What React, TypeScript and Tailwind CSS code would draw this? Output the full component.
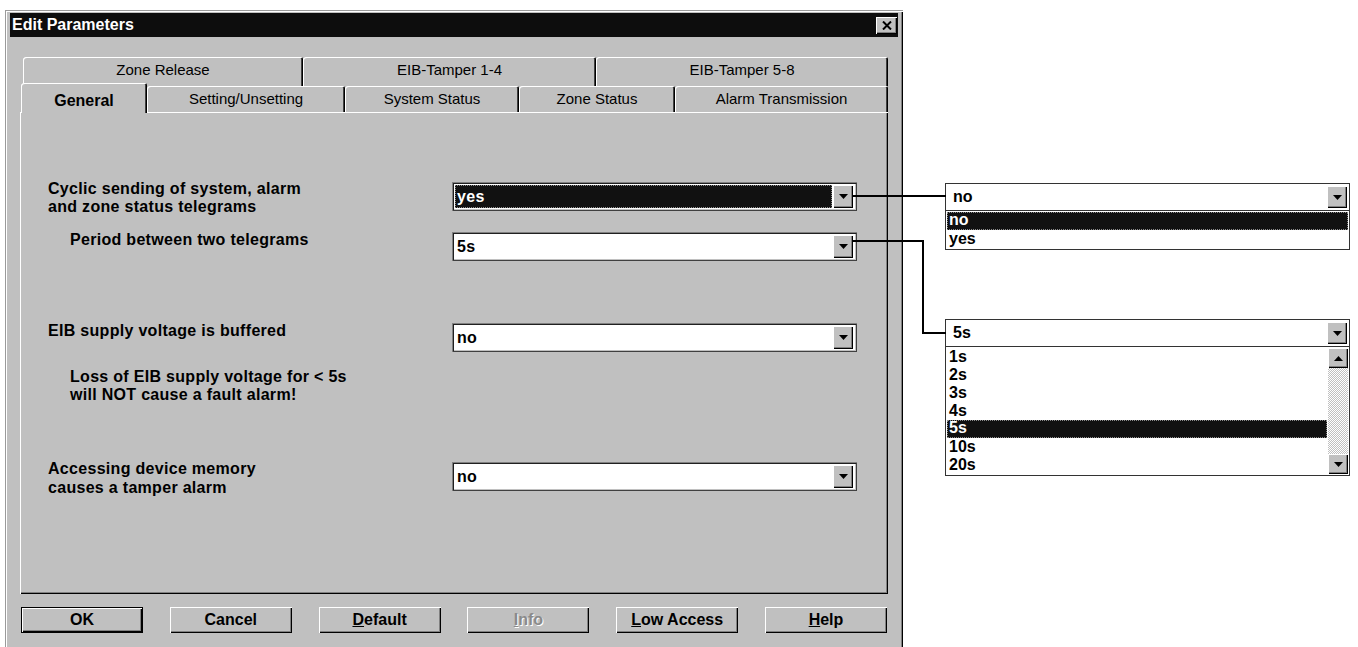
import React from "react";

const raised =
  "shadow-[inset_1px_1px_#ffffff,inset_-1px_-1px_#000000,inset_-2px_-2px_#808080]";

function DownArrow() {
  return (
    <svg width="9" height="5" viewBox="0 0 9 5" className="block">
      <polygon points="0,0 9,0 4.5,5" fill="#000" />
    </svg>
  );
}

function UpArrow() {
  return (
    <svg width="9" height="5" viewBox="0 0 9 5" className="block">
      <polygon points="0,5 9,5 4.5,0" fill="#000" />
    </svg>
  );
}

function DropButton() {
  return (
    <div className={`flex h-full w-[20px] shrink-0 items-center justify-center bg-[#c0c0c0] ${raised}`}>
      <DownArrow />
    </div>
  );
}

function Combo({ value, active }: { value: string; active?: boolean }) {
  return (
    <div className="flex h-[29px] w-[405px] shrink-0 bg-white p-[3px] pr-[4px] shadow-[inset_1px_1px_#808080,inset_-1px_-1px_#404040,inset_2px_2px_#202020,inset_-2px_-2px_#c0c0c0]">
      <div className="flex min-w-0 flex-1 items-stretch pr-[1px]">
        {active ? (
          <div className="flex w-full items-center border border-dotted border-[#8a8a8a] bg-[#111] pl-[1px] text-[16px] font-bold leading-none text-white">
            {value}
          </div>
        ) : (
          <div className="flex items-center pl-[2px] text-[16px] font-bold leading-none">{value}</div>
        )}
      </div>
      <DropButton />
    </div>
  );
}

function BackTab({ label, w }: { label: string; w: string }) {
  return (
    <div
      className={`flex h-[29px] items-start justify-center rounded-tl-[3px] rounded-tr-[2px] bg-[#c0c0c0] pt-[2px] text-[15px] shadow-[inset_1px_1px_#ffffff,inset_-1px_0_#000000,inset_-2px_0_#404040] ${w}`}
    >
      {label}
    </div>
  );
}

function FrontTab({ label, w }: { label: string; w: string }) {
  return (
    <div
      className={`flex h-[26px] items-center justify-center rounded-tl-[3px] rounded-tr-[2px] bg-[#c0c0c0] text-[15px] shadow-[inset_1px_1px_#ffffff,inset_-1px_0_#000000,inset_-2px_0_#404040] ${w}`}
    >
      {label}
    </div>
  );
}

function Button({
  children,
  isDefault,
  disabled,
}: {
  children: React.ReactNode;
  isDefault?: boolean;
  disabled?: boolean;
}) {
  return (
    <div
      className={`flex h-[26px] w-[122px] items-center justify-center bg-[#c0c0c0] text-[16px] font-bold ${
        isDefault
          ? "border border-black shadow-[inset_1px_1px_#ffffff,inset_-1px_-1px_#000000,inset_-2px_-2px_#808080]"
          : raised
      } ${disabled ? "text-[#8a8a8a] [text-shadow:1px_1px_0_#ffffff]" : "text-black"}`}
    >
      {children}
    </div>
  );
}

function ListRow({ text, selected }: { text: string; selected?: boolean }) {
  return (
    <div
      className={`flex h-[18px] items-end pl-[1px] text-[16px] font-bold leading-none ${
        selected ? "border border-dotted border-[#8a8a8a] bg-[#111] text-white" : "pl-[2px] text-black"
      }`}
    >
      <span className="pb-[1px]">{text}</span>
    </div>
  );
}

function PopupCombo({ value }: { value: string }) {
  return (
    <div className="flex h-[28px] border border-[#333] bg-white p-[2px]">
      <div className="flex flex-1 items-center pl-[5px] text-[16px] font-bold leading-none">{value}</div>
      <DropButton />
    </div>
  );
}

export default function App() {
  const periods = ["1s", "2s", "3s", "4s", "5s", "10s", "20s"];
  return (
    <div className="relative h-[647px] w-[1358px] overflow-hidden bg-white font-['Liberation_Sans',Arial,Helvetica,sans-serif] text-black">
      <div className="flex items-start">
        {/* Parameter dialog */}
        <div className="ml-[5px] mt-[10px] flex h-[645px] w-[898px] shrink-0 flex-col bg-[#c0c0c0] shadow-[inset_1px_1px_#9a9a9a,inset_2px_2px_#ffffff,inset_-1px_-1px_#000000,inset_-2px_-2px_#808080]">
          {/* Title bar */}
          <div className="mx-[5px] mt-[3px] flex h-[24px] items-center justify-between bg-[#0d0d0d] pl-[2px] pr-[1px]">
            <span className="text-[16px] font-bold leading-none text-white">Edit Parameters</span>
            <div className={`flex h-[17px] w-[21px] items-center justify-center bg-[#c0c0c0] ${raised}`}>
              <svg width="10" height="9" viewBox="0 0 10 9">
                <path d="M1 0.5 L9 8.5 M9 0.5 L1 8.5" stroke="#000" strokeWidth="2" />
              </svg>
            </div>
          </div>

          {/* Tab strip */}
          <div className="ml-[16px] mt-[20px] flex flex-col">
            <div className="flex pl-[2px]">
              <BackTab label="Zone Release" w="w-[280px]" />
              <BackTab label="EIB-Tamper 1-4" w="w-[293px]" />
              <BackTab label="EIB-Tamper 5-8" w="w-[292px]" />
            </div>
            <div className="flex h-[26px] items-end">
              <div className="relative z-10 -mb-[1px] flex h-[30px] w-[126px] items-center justify-center rounded-tl-[3px] rounded-tr-[2px] bg-[#c0c0c0] pt-[5px] text-[16px] font-bold shadow-[inset_1px_1px_#ffffff,inset_-1px_0_#000000,inset_-2px_0_#404040]">
                General
              </div>
              <FrontTab label="Setting/Unsetting" w="w-[198px]" />
              <FrontTab label="System Status" w="w-[174px]" />
              <FrontTab label="Zone Status" w="w-[156px]" />
              <FrontTab label="Alarm Transmission" w="w-[213px]" />
            </div>
          </div>

          {/* Tab page */}
          <div className="ml-[15px] flex h-[482px] w-[868px] flex-col bg-[#c0c0c0] pl-[28px] tracking-[0.3px] shadow-[inset_1px_1px_#ffffff,inset_-1px_-1px_#000000,inset_-2px_-2px_#808080]">
            <div className="mt-[70px] flex items-start">
              <div className="-mt-[2px] w-[404px] text-[16px] font-bold leading-[18px]">
                Cyclic sending of system, alarm
                <br />
                and zone status telegrams
              </div>
              <Combo value="yes" active />
            </div>
            <div className="mt-[16px] flex items-start">
              <div className="-mt-[1px] w-[404px] pl-[22px] text-[16px] font-bold leading-[18px]">
                Period between two telegrams
              </div>
              <Combo value="5s" />
            </div>
            <div className="mt-[62px] flex items-start">
              <div className="-mt-[1px] w-[404px] text-[16px] font-bold leading-[18px]">
                EIB supply voltage is buffered
              </div>
              <Combo value="no" />
            </div>
            <div className="mt-[16px] pl-[22px] text-[16px] font-bold leading-[18px]">
              Loss of EIB supply voltage for &lt; 5s
              <br />
              will NOT cause a fault alarm!
            </div>
            <div className="mt-[58px] flex items-start">
              <div className="-mt-[3px] w-[404px] text-[16px] font-bold leading-[19px]">
                Accessing device memory
                <br />
                causes a tamper alarm
              </div>
              <Combo value="no" />
            </div>
          </div>

          {/* Dialog buttons */}
          <div className="ml-[16px] mt-[13px] flex w-[866px] justify-between">
            <Button isDefault>OK</Button>
            <Button>Cancel</Button>
            <Button>
              <span className="underline">D</span>efault
            </Button>
            <Button disabled>
              <span className="underline">I</span>nfo
            </Button>
            <Button>
              <span className="underline">L</span>ow Access
            </Button>
            <Button>
              <span className="underline">H</span>elp
            </Button>
          </div>
        </div>

        {/* Opened drop-down lists */}
        <div className="ml-[42px] mt-[183px] flex w-[405px] shrink-0 flex-col">
          <PopupCombo value="no" />
          <div className="border border-t-0 border-[#333] bg-white px-[1px] pb-[1px] pt-[1px]">
            <ListRow text="no" selected />
            <ListRow text="yes" />
          </div>

          <div className="mt-[69px]">
            <PopupCombo value="5s" />
          </div>
          <div className="flex border border-t-0 border-[#333] bg-white p-[1px]">
            <div className="flex flex-1 flex-col pr-[1px]">
              {periods.map((p) => (
                <ListRow key={p} text={p} selected={p === "5s"} />
              ))}
            </div>
            <div className="flex w-[20px] flex-col">
              <div className={`flex h-[20px] items-center justify-center bg-[#c0c0c0] ${raised}`}>
                <UpArrow />
              </div>
              <div className="flex-1 bg-[repeating-conic-gradient(#c0c0c0_0%_25%,#ffffff_0%_50%)] bg-[length:2px_2px]" />
              <div className={`flex h-[20px] items-center justify-center bg-[#c0c0c0] ${raised}`}>
                <DownArrow />
              </div>
            </div>
          </div>
        </div>
      </div>

      {/* Leader lines from the dialog's drop-down buttons to their open lists */}
      <svg className="pointer-events-none absolute left-0 top-0" width="1358" height="647">
        <path d="M853 196 H946" stroke="#000" strokeWidth="2" fill="none" />
        <path d="M853 241 H923 V333 H946" stroke="#000" strokeWidth="2" fill="none" />
      </svg>
    </div>
  );
}
